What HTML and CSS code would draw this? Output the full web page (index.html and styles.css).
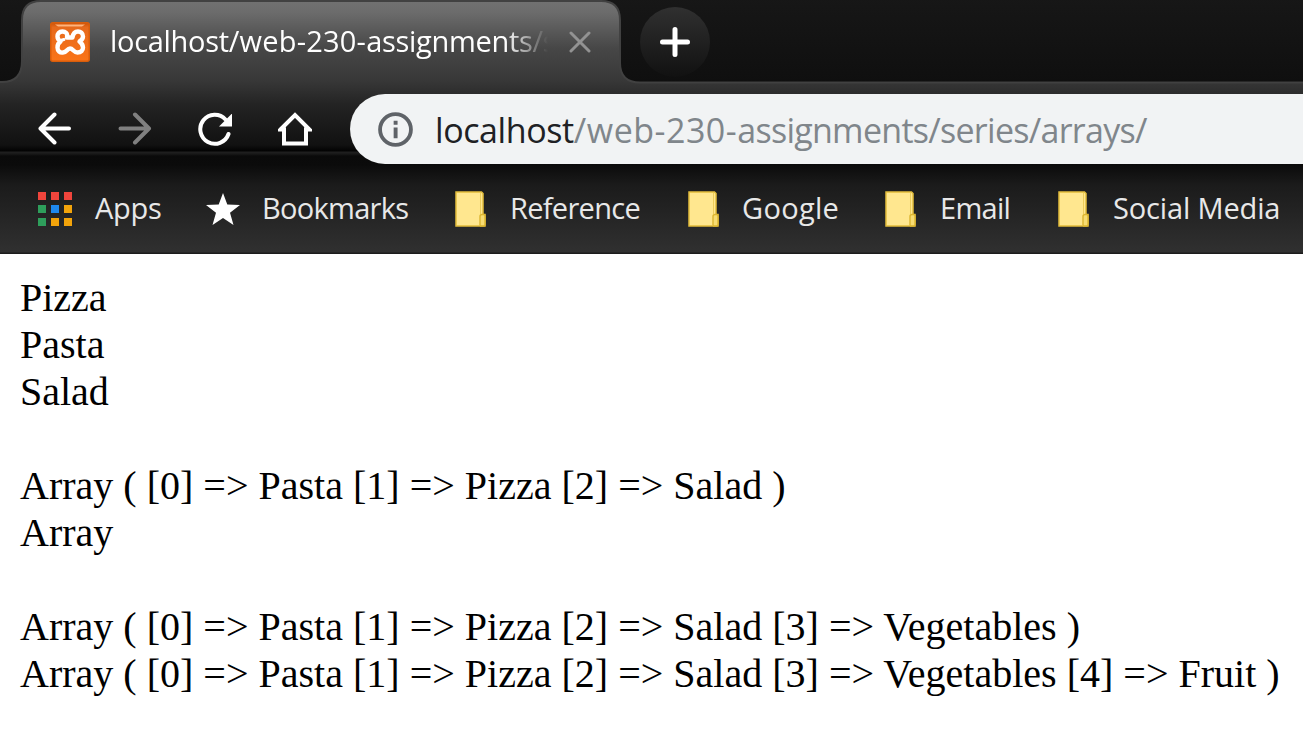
FILE: index.html
```html
<!DOCTYPE html>
<html lang="en">
<head>
<meta charset="utf-8">
<title>localhost/web-230-assignments/series/arrays/</title>
<link rel="stylesheet" href="styles.css">
</head>
<body>
<svg class="symbols" width="0" height="0" aria-hidden="true">
  <symbol id="folder" viewBox="0 0 31 36">
    <path d="M1 1H26.500L28 2.500V23.500H30V35H1Z" fill="#ffe78f" stroke="#e3bd3b" stroke-width="1.500"/>
    <path d="M25.500 2V23" stroke="#edcc5a" fill="none"/>
    <path d="M25 34.500V25.500Q25 23.500 27 23.500H28.500Q30 23.500 30 25V33.500Q30 35 28.500 35H25" fill="#f7dc72" stroke="#dcb52f" stroke-width="1.400"/>
  </symbol>
</svg>
<header class="chrome">
  <div class="tabstrip">
    <svg class="strip-shape" viewBox="0 0 1303 84" aria-hidden="true">
      <defs><linearGradient id="strip" x2="0" y2="1"><stop stop-color="#171717"/><stop offset="1" stop-color="#0f0f0f"/></linearGradient></defs>
      <path fill-rule="evenodd" d="M-3 -3H1306V82.500H640Q620 82.500 620 63V20Q620 1 601 1H41Q22 1 22 20V61Q22 82 2 82H-3Z" fill="url(#strip)" stroke="#414141" stroke-width="2"/>
    </svg>
    <div class="tab">
      <svg class="favicon" viewBox="0 0 40 40">
        <defs><linearGradient id="fav" x2="0" y2="1"><stop stop-color="#c95309"/><stop offset=".12" stop-color="#e76a1c"/><stop offset="1" stop-color="#fa7418"/></linearGradient></defs>
        <rect x=".75" y=".75" width="38.500" height="38.500" rx="2" fill="url(#fav)" stroke="#d95d0b" stroke-width="1.500"/>
        <path d="M5 2.500H35L32 4.500H8Z" fill="#ffb47c"/>
        <g fill="none" stroke="#fff" stroke-width="4.400" stroke-linejoin="round" stroke-linecap="round">
          <path d="M17 15.500C18 11 15 9.500 12.500 9.500C9 9.500 7.500 12 7.500 14.500C7.500 17 9 18.500 10.500 19.500C8 21 7.500 23 7.500 25.500C7.500 29 10 31 13 30.500C17 30.500 17 26.500 20 26.500C23 26.500 23.500 30.500 27.500 30.500C31 30.500 33 28.500 33 25.500C33 22.500 31.500 21 29.500 19.500C32 18 33 16.500 33 14.500C33 11 30.500 9.500 28 9.500C24.500 9.500 23 12 22.500 15.500H17"/>
          <path d="M10.500 18.500L14 17.500" stroke-width="3"/>
        </g>
      </svg>
      <span class="tab-title">localhost<span class="tab-path">/web-230-</span>assignments/s</span>
      <svg class="tab-close" viewBox="0 0 22 22"><path d="M2 2L20 20M20 2L2 20" stroke="#929292" stroke-width="3" stroke-linecap="round"/></svg>
    </div>
    <div class="new-tab"><svg viewBox="0 0 30 30"><path d="M15 2.500V27.500M2.500 15H27.500" stroke="#fff" stroke-width="5" stroke-linecap="round"/></svg></div>
  </div>
  <nav class="toolbar">
    <svg class="tool" viewBox="0 0 34 34"><path d="M31 16.500H3M16.500 2.500L2.500 16.500L16.500 30.500" stroke="#fff" class="line"/></svg>
    <svg class="tool" viewBox="0 0 34 34"><path d="M2.500 16.500H31M17 2.500L31 16.500L17 30.500" stroke="#808080" class="line"/></svg>
    <svg class="tool" viewBox="0 0 34 34"><path d="M27.500 7.500A14.500 14.500 0 1 0 30.500 22" stroke="#fff" class="line"/><path d="M34.500 1V14.500H21Z" fill="#fff"/></svg>
    <svg class="tool" viewBox="0 0 34 34"><path d="M2.500 17.500L17 3L31.500 17.500H28V31.500H6V17.500Z" stroke="#fff" class="line home"/></svg>
    <div class="omnibox">
      <svg class="info" viewBox="0 0 34 34"><circle cx="17" cy="17" r="15" fill="none" stroke="#5f6368" stroke-width="3.700"/><path d="M15.200 8.500H19V12.500H15.200ZM15.200 15H19V25.500H15.200Z" fill="#5f6368"/></svg>
      <span class="url"><span class="host">localhost</span><span class="folder-name">/web-230-</span><span class="rest">assignments/series/arrays/</span></span>
    </div>
  </nav>
  <nav class="bookmarks">
    <a class="mark apps"><svg class="grid-icon" viewBox="0 0 34 34">
      <path d="M0 0H8V8H0ZM13 0H21V8H13ZM26 0H34V8H26Z" fill="#f0453c"/>
      <path d="M0 13H8V21H0ZM0 26H8V34H0Z" fill="#2e9e5b"/>
      <path d="M13 13H21V21H13Z" fill="#1e88ee"/>
      <path d="M26 13H34V21H26ZM13 26H21V34H13ZM26 26H34V34H26Z" fill="#f3a40b"/></svg><span>Apps</span></a>
    <a class="mark saved"><svg class="star" viewBox="0 0 34 32"><path d="M17 0L21.300 11.600L34 12L24 19.800L27.500 32L17 25L6.500 32L10 19.800L0 12L12.700 11.600Z" fill="#fff"/></svg><span>Bookmarks</span></a>
    <a class="mark reference"><svg class="folder"><use href="#folder"/></svg><span>Reference</span></a>
    <a class="mark google"><svg class="folder"><use href="#folder"/></svg><span>Google</span></a>
    <a class="mark email"><svg class="folder"><use href="#folder"/></svg><span>Email</span></a>
    <a class="mark social"><svg class="folder"><use href="#folder"/></svg><span>Social Media</span></a>
  </nav>
</header>
<main class="output">Pizza<br>Pasta<br>Salad<br><br>Array ( [0] =&gt; Pasta [1] =&gt; Pizza [2] =&gt; Salad )<br>Array<br><br>Array ( [0] =&gt; Pasta [1] =&gt; Pizza [2] =&gt; Salad [3] =&gt; Vegetables )<br>Array ( [0] =&gt; Pasta [1] =&gt; Pizza [2] =&gt; Salad [3] =&gt; Vegetables [4] =&gt; Fruit )</main>
</body>
</html>
```
FILE: styles.css
```css
* { box-sizing: border-box; }
body { margin: 0; background: #fff; overflow: hidden; }
svg { display: block; flex: none; }
.symbols { position: absolute; }
.chrome {
  height: 254px;
  font-family: "Open Sans", "Noto Sans", sans-serif;
  background: linear-gradient(#727272 0, #6c6c6c 12px, #474747 48px, #383838 80px, #232323 105px, #111 145px, #020202 151px, #202020 152px, #181818 154px, #0a0a0a 156px, #0b0b0b 165px, #1b1b1b 185px, #303030 252px, #1c1c1c 253px);
}
.tabstrip { position: relative; height: 84px; display: flex; padding-left: 22px; }
.strip-shape { position: absolute; left: 0; top: 0; width: 1303px; height: 84px; }
.tab { position: relative; width: 598px; height: 82px; display: flex; align-items: center; padding: 2px 29px 0 28px; }
.favicon { width: 40px; height: 40px; }
.tab-title {
  width: 438px;
  margin-left: 20px;
  padding-bottom: 2px;
  white-space: nowrap;
  font-size: 29px;
  line-height: 44px;
  letter-spacing: -0.3px;
  color: #fff;
  -webkit-mask-image: linear-gradient(90deg, #000 395px, transparent 438px);
  mask-image: linear-gradient(90deg, #000 395px, transparent 438px);
}
.tab-path { letter-spacing: 0.2px; }
.tab-close { width: 22px; height: 22px; margin-left: 21px; }
.new-tab {
  position: relative;
  width: 70px;
  height: 70px;
  margin: 7px 0 0 20px;
  border-radius: 50%;
  background: linear-gradient(#303030, #111);
  display: flex;
  align-items: center;
  justify-content: center;
}
.new-tab svg { width: 30px; height: 30px; }
.toolbar { height: 80px; padding: 10px 0 0 38px; display: flex; align-items: center; gap: 46px; }
.tool { width: 34px; height: 34px; }
.line { fill: none; stroke-width: 4; stroke-linecap: round; stroke-linejoin: round; }
.home { stroke-linejoin: miter; }
.omnibox {
  flex: 1;
  height: 70px;
  margin-left: -8px;
  padding-left: 28px;
  border-radius: 35px 0 0 35px;
  background: #f1f3f4;
  display: flex;
  align-items: center;
}
.info { width: 35px; height: 35px; }
.url { margin-left: 22px; padding-top: 1px; font-size: 34px; letter-spacing: -0.4px; line-height: 50px; white-space: nowrap; color: #80868b; }
.host { color: #202124; }
.folder-name { letter-spacing: 0.5px; }
.rest { letter-spacing: -0.72px; }
.bookmarks { height: 90px; padding-left: 38px; display: flex; align-items: center; font-size: 29px; color: #e8e8e8; white-space: nowrap; }
.mark { display: flex; align-items: center; }
.mark span { letter-spacing: -0.3px; padding-bottom: 3px; }
.apps { width: 168px; gap: 23px; }
.saved { width: 249px; gap: 22px; }
.saved span { letter-spacing: -0.7px; }
.reference { width: 233px; gap: 24px; }
.reference span { letter-spacing: -0.7px; }
.google { width: 197px; gap: 23px; }
.google span { letter-spacing: 0.3px; }
.email { width: 173px; gap: 24px; }
.email span { letter-spacing: -0.7px; }
.social { gap: 24px; }
.social span { letter-spacing: -0.15px; }
.grid-icon { width: 34px; height: 34px; }
.star { width: 34px; height: 32px; }
.folder { width: 31px; height: 36px; }
.output { padding: 20px; font: 40px/47px "Liberation Serif", "Times New Roman", serif; word-spacing: 0.04px; color: #000; white-space: nowrap; }
```
